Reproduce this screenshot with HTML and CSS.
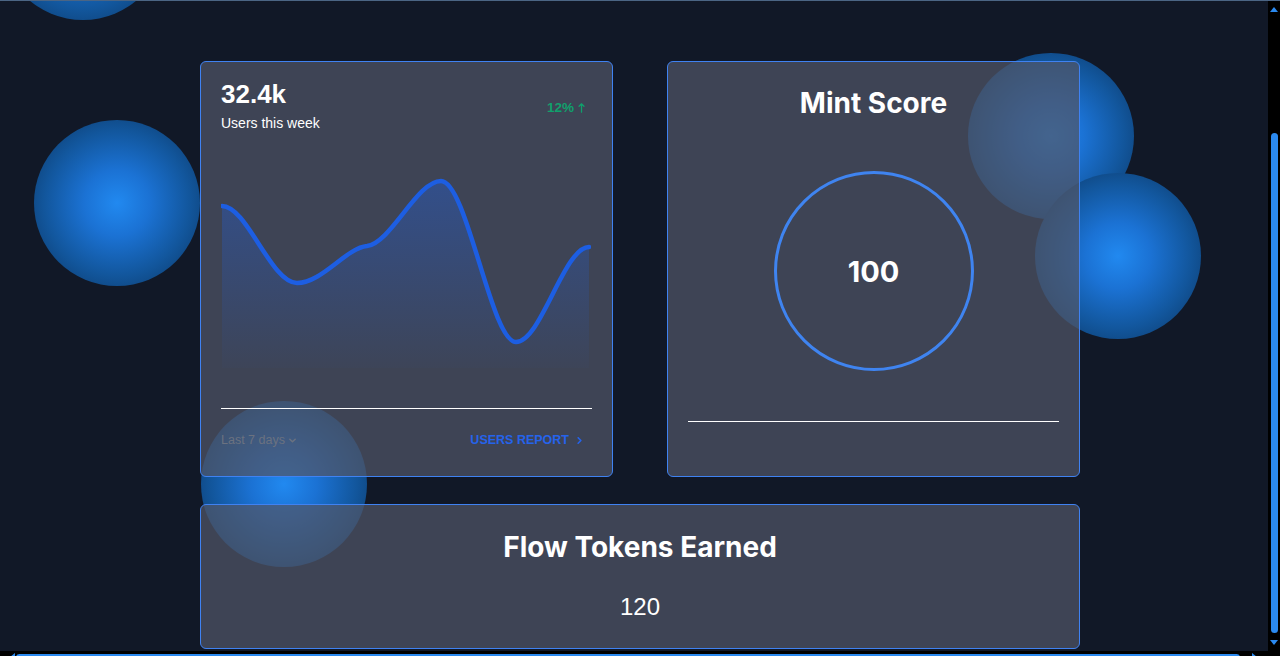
FILE: index.html
```html
<!DOCTYPE html>
<html lang="en">
<head>
<meta charset="utf-8">
<title>Dashboard</title>
<link rel="stylesheet" href="styles.css">
</head>
<body>
<div class="window">
  <div class="viewport">
    <div class="page">
      <span class="orb orb-1"></span>
      <span class="orb orb-2"></span>
      <span class="orb orb-3"></span>
      <span class="orb orb-4"></span>
      <span class="orb orb-5"></span>
      <main class="dashboard">
        <section class="card users-card">
          <div class="users-head">
            <div>
              <div class="users-count">32.4k</div>
              <div class="users-label">Users this week</div>
            </div>
            <div class="users-growth">12%
              <svg class="up-arrow" viewBox="0 0 10 14" width="7" height="10"><path d="M5 13V1M1.5 4.5L5 1l3.5 3.5" fill="none" stroke="currentColor" stroke-width="1.8" stroke-linecap="round" stroke-linejoin="round"/></svg>
            </div>
          </div>
          <div class="chart">
            <svg viewBox="0 0 370 200" width="370" height="200">
              <defs>
                <linearGradient id="areaFill" x1="0" y1="0" x2="0" y2="1">
                  <stop offset="0" stop-color="#1c64f2" stop-opacity="0.34"/>
                  <stop offset="1" stop-color="#1c64f2" stop-opacity="0.02"/>
                </linearGradient>
              </defs>
              <path d="M1,36 C26,36 50,113 76,113 C101,113 125,78 146,76 C170,73 196,11 220,11 C246,11 270,172 295,172 C320,172 343,77 368,77 L368,198 L1,198 Z" fill="url(#areaFill)"/>
              <path d="M1,36 C26,36 50,113 76,113 C101,113 125,78 146,76 C170,73 196,11 220,11 C246,11 270,172 295,172 C320,172 343,77 368,77" fill="none" stroke="#1d5ee2" stroke-width="4.5" stroke-linecap="round"/>
            </svg>
          </div>
          <div class="card-footer">
            <span class="range">Last 7 days
              <svg viewBox="0 0 10 10" width="9" height="9"><path d="M2 3.5l3 3 3-3" fill="none" stroke="currentColor" stroke-width="1.6" stroke-linecap="round" stroke-linejoin="round"/></svg>
            </span>
            <a class="report" href="#">USERS REPORT
              <svg viewBox="0 0 10 10" width="9" height="9"><path d="M3.5 2l3 3-3 3" fill="none" stroke="currentColor" stroke-width="1.8" stroke-linecap="round" stroke-linejoin="round"/></svg>
            </a>
          </div>
        </section>
        <section class="card score-card">
          <h2 class="card-title">Mint Score</h2>
          <div class="score-ring">100</div>
          <div class="score-rule"></div>
        </section>
        <section class="card tokens-card">
          <h2 class="card-title">Flow Tokens Earned</h2>
          <p class="tokens-value">120</p>
        </section>
      </main>
    </div>
  </div>

  <div class="vbar" aria-hidden="true">
    <span class="sb-btn sb-up"><svg viewBox="0 0 8 5" width="8" height="5"><path d="M0 5L4 0l4 5z"/></svg></span>
    <span class="vtrack"><span class="vthumb"></span></span>
    <span class="sb-btn sb-down"><svg viewBox="0 0 8 5" width="8" height="5"><path d="M0 0h8L4 5z"/></svg></span>
  </div>

  <div class="hbar" aria-hidden="true">
    <span class="sb-btn sb-left"><svg viewBox="0 0 5 8" width="5" height="8"><path d="M5 0v8L0 4z"/></svg></span>
    <span class="htrack"><span class="hthumb"></span></span>
    <span class="sb-btn sb-right"><svg viewBox="0 0 5 8" width="5" height="8"><path d="M0 0l5 4-5 4z"/></svg></span>
  </div>

  <div class="corner"></div>
</div>
</body>
</html>
```
FILE: styles.css
```css
html, body {
  margin: 0;
  height: 100%;
  overflow: hidden;
  background: #111827;
}

.window {
  display: grid;
  grid-template-columns: 1268px 12px;
  grid-template-rows: 650px 12px;
  border-top: 1px solid #4b6584;
  background: #111827;
}

.viewport {
  overflow: hidden;
  display: flex;
  flex-direction: column-reverse;
}

/* scrollbars */
.vbar, .hbar, .corner { background: #000000; }

.vbar {
  display: flex;
  flex-direction: column;
  align-items: center;
}

.sb-btn {
  display: flex;
  align-items: center;
  justify-content: center;
  flex-shrink: 0;
}
.sb-btn svg { display: block; fill: #2b8af0; }

.sb-up { height: 18px; align-items: flex-start; padding-top: 6px; box-sizing: border-box; }
.sb-down { height: 17px; align-items: flex-start; padding-top: 6px; box-sizing: border-box; }

.vtrack {
  flex: 1;
  width: 7px;
  display: flex;
  flex-direction: column;
  justify-content: flex-end;
}
.vthumb {
  height: 500px;
  margin-bottom: 1px;
  border-radius: 4px;
  background: #2b8af0;
}

.hbar {
  display: flex;
  align-items: center;
}
.sb-left { width: 16px; justify-content: flex-end; padding-right: 1px; box-sizing: border-box; }
.sb-right { width: 28px; justify-content: center; }
.htrack {
  flex: 1;
  height: 7px;
  display: flex;
}
.hthumb {
  flex: 1;
  border-radius: 4px;
  background: #2b8af0;
}

/* page content */
.page {
  position: relative;
  flex-shrink: 0;
  width: 1268px;
  padding: 222px 0 0;
  font-family: "Liberation Sans", Arial, sans-serif;
  color: #ffffff;
}

.orb {
  position: absolute;
  width: 166px;
  height: 166px;
  border-radius: 50%;
  background: radial-gradient(circle at 50% 50%, #2189f0 0%, #1b72d4 28%, #12569c 62%, #0c3868 92%, #0d3260 100%);
}
.orb-1 { left: 0; top: 15px; }
.orb-2 { left: 34px; top: 281px; }
.orb-3 { left: 968px; top: 214px; }
.orb-4 { left: 1035px; top: 334px; }
.orb-5 { left: 201px; top: 562px; }

.dashboard {
  position: relative;
  z-index: 1;
  width: 880px;
  margin-left: 200px;
  margin-bottom: 2px;
  display: grid;
  grid-template-columns: 413px 413px;
  grid-template-rows: 416px 145px;
  column-gap: 54px;
  row-gap: 27px;
}

.card {
  box-sizing: border-box;
  background: rgba(80, 86, 104, 0.72);
  border: 1px solid #3f82f2;
  border-radius: 6px;
}

/* Users card */
.users-card {
  padding: 20px 20px 25px;
  display: flex;
  flex-direction: column;
}

.users-head {
  display: flex;
  justify-content: space-between;
  align-items: center;
}

.users-count {
  font-size: 26px;
  font-weight: 700;
  line-height: 24px;
}

.users-label {
  margin-top: 7px;
  font-size: 14px;
  line-height: 20px;
}

.users-growth {
  display: flex;
  align-items: center;
  gap: 4px;
  margin-right: 7px;
  color: #10a06c;
  font-size: 13.5px;
  font-weight: 700;
}

.chart {
  margin-top: 37px;
  height: 200px;
}
.chart svg { display: block; }

.card-footer {
  margin-top: 38px;
  border-top: 1px solid #ffffff;
  padding-top: 21px;
  display: flex;
  justify-content: space-between;
  align-items: center;
  font-size: 12.5px;
  line-height: 20px;
}

.range {
  display: flex;
  align-items: center;
  gap: 3px;
  color: #6b7280;
}

.report {
  display: flex;
  align-items: center;
  gap: 6px;
  margin-right: 8px;
  color: #2563eb;
  font-weight: 700;
  text-decoration: none;
}

/* Titles */
.card-title {
  margin: 0;
  font-family: "Inter", "Lato", sans-serif;
  font-size: 28px;
  font-weight: 700;
  line-height: 34px;
  text-align: center;
  color: #ffffff;
}

/* Mint score */
.score-card {
  padding: 24px 20px 20px;
  display: flex;
  flex-direction: column;
  align-items: center;
}

.score-ring {
  margin-top: 51px;
  width: 200px;
  height: 200px;
  box-sizing: border-box;
  border: 3px solid #3f84f0;
  border-radius: 50%;
  display: flex;
  align-items: center;
  justify-content: center;
  font-family: "Inter", "Lato", sans-serif;
  font-size: 29px;
  font-weight: 700;
}

.score-rule {
  align-self: stretch;
  margin-top: 50px;
  border-top: 1px solid #ffffff;
}

/* Tokens */
.tokens-card {
  grid-column: 1 / span 2;
  padding-top: 25px;
  text-align: center;
}

.tokens-value {
  margin: 29px 0 0;
  font-size: 24px;
  line-height: 28px;
}
```
